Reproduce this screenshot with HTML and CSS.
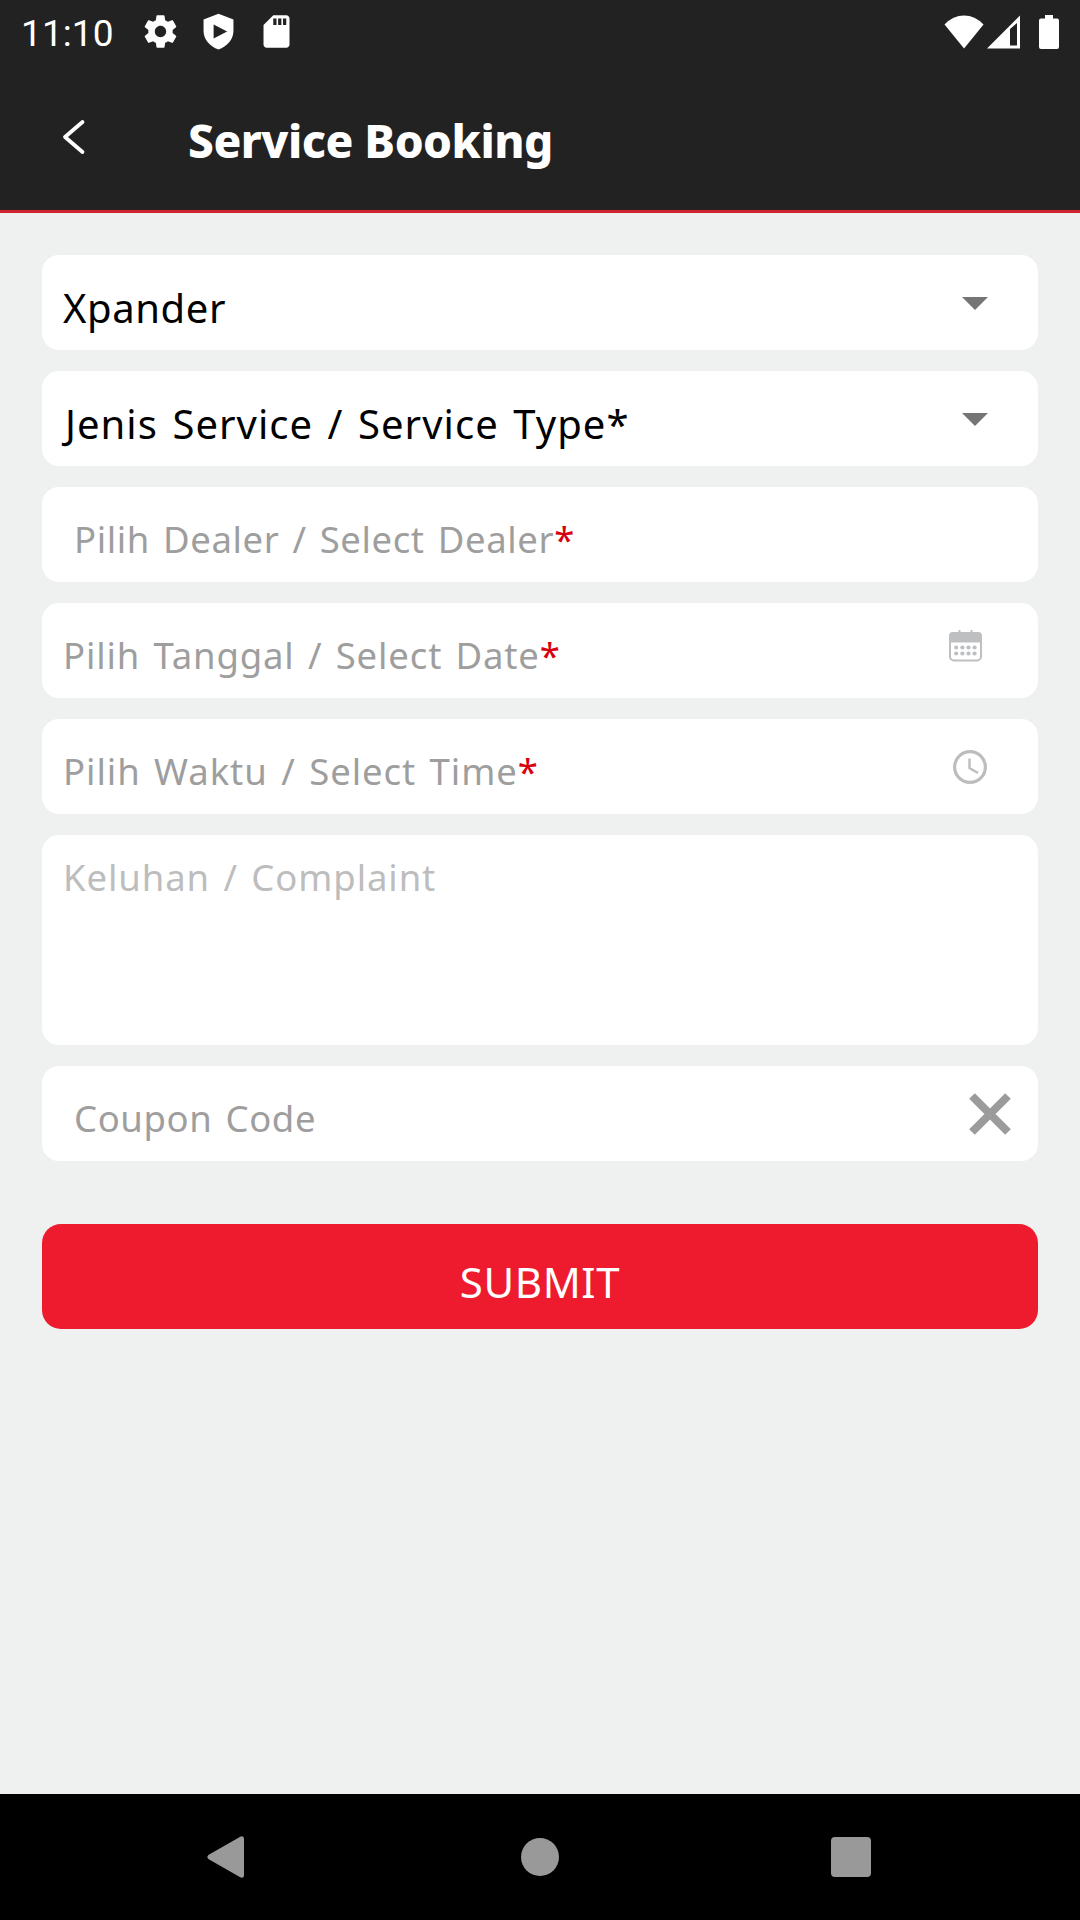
FILE: index.html
```html
<!DOCTYPE html>
<html lang="id">
<head>
    <meta charset="UTF-8">
    <meta name="viewport" content="width=device-width, initial-scale=1.0">
    <title>Service Booking</title>
    <link rel="stylesheet" href="styles.css">
</head>
<body>
    <!-- Status bar -->
    <div class="status-bar">
        <span class="clock">11:10</span>
        <div class="status-left">
            <svg width="39" height="39" viewBox="0 0 24 24" fill="#fff"><path d="M19.43 12.98c.04-.32.07-.64.07-.98s-.03-.66-.07-.98l2.11-1.65c.19-.15.24-.42.12-.64l-2-3.46c-.12-.22-.39-.3-.61-.22l-2.49 1c-.52-.4-1.08-.73-1.69-.98l-.38-2.65C14.46 2.18 14.25 2 14 2h-4c-.25 0-.46.18-.49.42l-.38 2.65c-.61.25-1.17.59-1.69.98l-2.49-1c-.23-.09-.49 0-.61.22l-2 3.46c-.13.22-.07.49.12.64l2.11 1.65c-.04.32-.07.65-.07.98s.03.66.07.98l-2.11 1.65c-.19.15-.24.42-.12.64l2 3.46c.12.22.39.3.61.22l2.49-1c.52.4 1.08.73 1.69.98l.38 2.65c.03.24.24.42.49.42h4c.25 0 .46-.18.49-.42l.38-2.65c.61-.25 1.17-.59 1.69-.98l2.49 1c.23.09.49 0 .61-.22l2-3.46c.12-.22.07-.49-.12-.64l-2.11-1.65zM12 15.5c-1.93 0-3.5-1.57-3.5-3.5s1.57-3.5 3.5-3.5 3.5 1.57 3.5 3.5-1.57 3.5-3.5 3.5z"/></svg>
            <svg width="39" height="39" viewBox="0 0 24 24" fill="#fff" fill-rule="evenodd"><path d="M12 1L2.8 4.6v7c0 5.3 3.9 9.9 9.2 11.4 5.3-1.5 9.2-6.1 9.2-11.4v-7L12 1zM9 7.700l8.300 4.300L9 16.300z"/></svg>
            <svg width="39" height="39" viewBox="0 0 24 24" fill="#fff"><path d="M18 2h-8L4.020 8 4 20c0 1.100.9 2 2 2h12c1.100 0 2-.9 2-2V4c0-1.100-.9-2-2-2zm-6 6h-2V4h2v4zm3 0h-2V4h2v4zm3 0h-2V4h2v4z"/></svg>
        </div>
        <div class="status-right">
            <svg width="40" height="34" viewBox="0 0 40 34" fill="#fff"><path d="M20 33.500L.5 9.500Q9 .5 20 .5t19.500 9z"/></svg>
            <svg class="signal" width="33" height="34" viewBox="0 0 33 34" fill="#fff" fill-rule="evenodd"><path d="M0 33.500L33 .5v33zM23 14v16.500h7V8z"/></svg>
            <svg class="battery" width="20" height="34" viewBox="0 0 20 34" fill="#fff"><path d="M6 0h8v3.500h4q2 0 2 2V32q0 2-2 2H2q-2 0-2-2V5.500q0-2 2-2h4z"/></svg>
        </div>
    </div>

    <!-- Header -->
    <header class="header">
        <svg class="back" width="26" height="36" viewBox="0 0 26 36" fill="none" stroke="#fff" stroke-width="3.800" stroke-linecap="round" stroke-linejoin="round"><path d="M22.500 3L5 18l17.500 15"/></svg>
        <h1>Service Booking</h1>
    </header>

    <main class="form">
        <div class="field dark">
            <span class="text model">Xpander</span>
            <svg class="arrow" width="26" height="13" viewBox="0 0 26 13" fill="#757575"><path d="M0 0h26L13 13z"/></svg>
        </div>
        <div class="field dark">
            <span class="text type">Jenis Service / Service Type*</span>
            <svg class="arrow" width="26" height="13" viewBox="0 0 26 13" fill="#757575"><path d="M0 0h26L13 13z"/></svg>
        </div>
        <div class="field indent">
            <span class="text dealer">Pilih Dealer / Select Dealer<b>*</b></span>
        </div>
        <div class="field">
            <span class="text date">Pilih Tanggal / Select Date<b>*</b></span>
            <svg class="calendar" width="33" height="32" viewBox="0 0 33 32" fill="#bdbfc1">
                <path d="M9.500 0h2v3h-2zM21.500 0h2v3h-2z"/>
                <rect x="1" y="3" width="31" height="27.500" rx="4" fill="none" stroke="#bdbfc1" stroke-width="2"/>
                <path d="M0 12.500V6q0-4 4-4h25q4 0 4 4v6.500z"/>
                <circle cx="7.200" cy="17.500" r="2.100"/><circle cx="13.400" cy="17.500" r="2.100"/><circle cx="19.500" cy="17.500" r="2.100"/><circle cx="25.600" cy="17.500" r="2.100"/>
                <circle cx="7.200" cy="23.500" r="2.100"/><circle cx="13.400" cy="23.500" r="2.100"/><circle cx="19.500" cy="23.500" r="2.100"/><circle cx="25.600" cy="23.500" r="2.100"/>
            </svg>
        </div>
        <div class="field">
            <span class="text time">Pilih Waktu / Select Time<b>*</b></span>
            <svg class="time-icon" width="34" height="34" viewBox="0 0 34 34" fill="none" stroke="#bdbdbd"><circle cx="17" cy="17" r="15.400" stroke-width="3.200"/><path d="M16.500 8.500v9.500l8.500 5" stroke-width="2.400"/></svg>
        </div>
        <div class="field complaint">
            <span class="text">Keluhan / Complaint</span>
        </div>
        <div class="field indent">
            <span class="text coupon">Coupon Code</span>
            <svg class="clear" width="42" height="42" viewBox="0 0 42 42" fill="none" stroke="#9b9b9b" stroke-width="8"><path d="M3 3l36 36M39 3L3 39"/></svg>
        </div>
        <button class="submit">SUBMIT</button>
    </main>

    <!-- Navigation bar -->
    <nav class="nav-bar">
        <svg width="38" height="42" viewBox="0 0 38 42" fill="#999" stroke="#999" stroke-width="5" stroke-linejoin="round"><path d="M34.500 2.800v36.400L3 21z"/></svg>
        <svg class="home" width="38" height="38" viewBox="0 0 38 38" fill="#999"><circle cx="19" cy="19" r="19"/></svg>
        <svg width="40" height="40" viewBox="0 0 40 40" fill="#999"><rect width="40" height="40" rx="4"/></svg>
    </nav>
</body>
</html>
```
FILE: styles.css
```css
* {
    box-sizing: border-box;
}
body {
    margin: 0;
    height: 1920px;
    display: flex;
    flex-direction: column;
    background-color: #eff1f1;
    font-family: "Noto Sans", "Open Sans", sans-serif;
    overflow: hidden;
}
svg {
    display: block;
    flex-shrink: 0;
}
.status-bar {
    height: 63px;
    padding: 0 21px;
    display: flex;
    align-items: center;
    background-color: #222;
    color: #fff;
}
.clock {
    width: 120px;
    font-family: Roboto, sans-serif;
    font-size: 37px;
    line-height: 63px;
    padding-top: 3px;
    letter-spacing: 0.1px;
}
.status-left {
    display: flex;
    gap: 19px;
}
.status-right {
    display: flex;
    margin-left: auto;
}
.signal {
    margin-left: 3px;
}
.battery {
    margin-left: 19px;
}
.header {
    height: 150px;
    display: flex;
    align-items: center;
    background-color: #222;
    border-bottom: 3px solid #d0242e;
    padding-left: 60px;
}
.back {
    margin-top: 1px;
}
h1 {
    margin: 7px 0 0 102px;
    color: #fff;
    font-size: 46px;
    font-weight: 800;
    line-height: 60px;
    letter-spacing: -0.5px;
}
.form {
    flex: 1;
    padding: 42px;
    display: flex;
    flex-direction: column;
    gap: 21px;
}
.field {
    height: 95px;
    padding-left: 21px;
    display: flex;
    align-items: center;
    justify-content: space-between;
    background-color: #fff;
    border-radius: 17px;
    color: #9e9e9e;
    font-size: 36.5px;
    white-space: nowrap;
    word-spacing: 3px;
}
.dark {
    color: #000;
    font-size: 40px;
}
.indent {
    padding-left: 32px;
}
.text {
    padding-top: 8px;
}
.dark .text {
    padding-top: 9px;
}
.text b {
    color: #d9000d;
    font-weight: 400;
}
.model {
    letter-spacing: 0.6px;
}
.type {
    padding-left: 2px;
    letter-spacing: 1.05px;
}
.dealer {
    letter-spacing: 0.6px;
}
.date {
    letter-spacing: 0.85px;
}
.time {
    letter-spacing: 0.95px;
}
.arrow {
    margin: 1px 50px 0 0;
}
.calendar {
    margin: 0 56px 10px 0;
}
.time-icon {
    margin-right: 51px;
}
.clear {
    margin-right: 27px;
}
.complaint {
    height: 210px;
    align-items: flex-start;
    color: #bdbdbd;
    letter-spacing: 0.9px;
}
.complaint .text {
    padding-top: 17px;
}
.coupon {
    letter-spacing: 0.6px;
}
.submit {
    height: 105px;
    margin-top: 42px;
    padding: 9px 0 0;
    border: none;
    border-radius: 19px;
    background-color: #ee1b2e;
    color: #fff;
    font-family: inherit;
    font-size: 42px;
    letter-spacing: 0.6px;
}
.nav-bar {
    height: 126px;
    padding: 0 209px 0 207px;
    display: flex;
    align-items: center;
    justify-content: space-between;
    background-color: #000;
}
.home {
    margin-left: 4px;
}
```
